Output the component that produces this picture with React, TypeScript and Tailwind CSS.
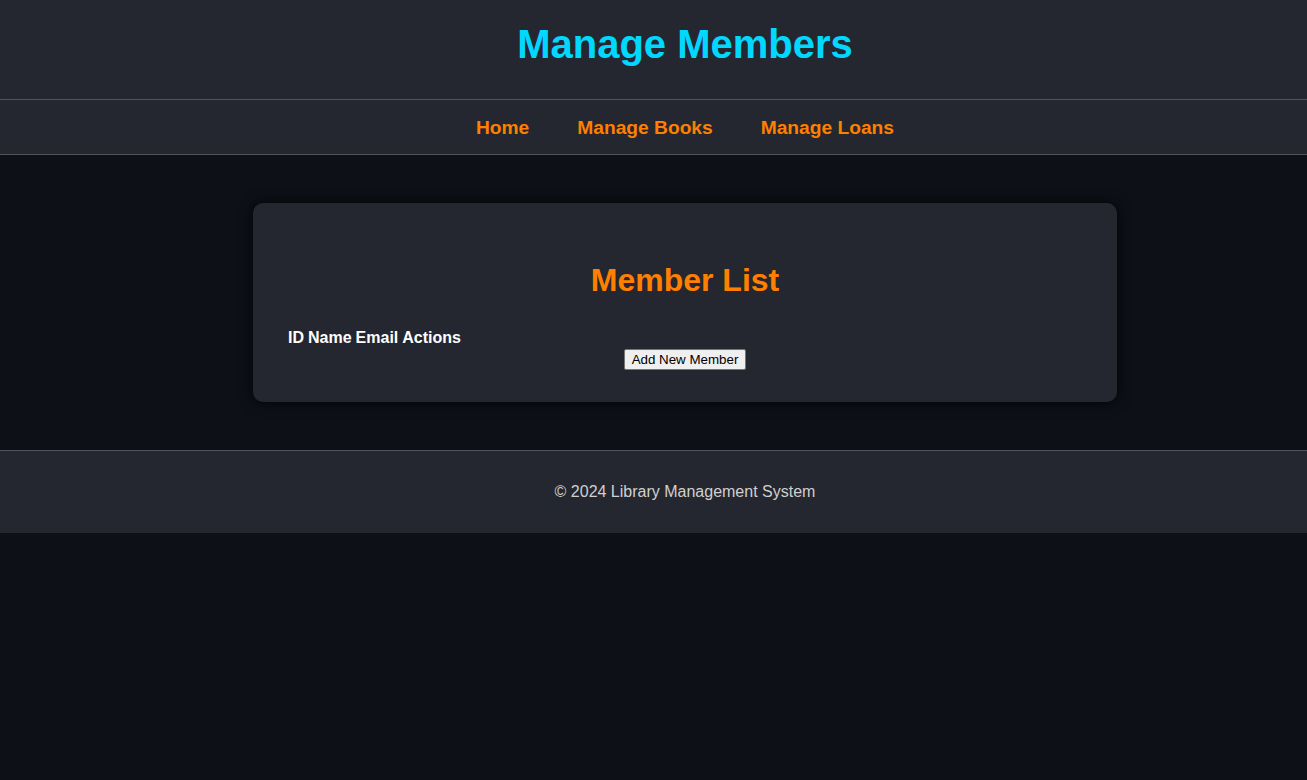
const navLinks = ["Home", "Manage Books", "Manage Loans"];

export default function App() {
  return (
    <div className="min-h-screen overflow-hidden bg-[#0d1017] font-['Liberation_Sans',Arial,sans-serif]">
      <div className="w-[1370px]">
        <header className="h-[99px] bg-[#24272f] pt-[21px] text-center">
          <h1 className="text-[40px] leading-[46px] font-bold text-[#00d8ff]">
            Manage Members
          </h1>
        </header>

        <nav className="flex h-[56px] items-center justify-center gap-12 border-y border-[#50545c] bg-[#24272f] pt-px">
          {navLinks.map((link) => (
            <a
              key={link}
              href="#"
              className="text-[19.2px] leading-[22px] font-bold text-[#ff7f00]"
            >
              {link}
            </a>
          ))}
        </nav>

        <main className="py-12">
          <section className="mx-auto w-[864px] rounded-[10px] bg-[#24272f] p-8 shadow-[0_0_14px_rgba(0,0,0,0.85)]">
            <h2 className="mt-[26.5px] mb-[27.5px] text-center text-[32px] leading-[37px] font-bold text-[#ff7f00]">
              Member List
            </h2>
            <table className="border-separate border-spacing-[2px] text-white">
              <thead>
                <tr>
                  <th className="p-px text-left text-base leading-[18.4px] font-bold">ID</th>
                  <th className="p-px text-left text-base leading-[18.4px] font-bold">Name</th>
                  <th className="p-px text-left text-base leading-[18.4px] font-bold">Email</th>
                  <th className="p-px text-left text-base leading-[18.4px] font-bold">Actions</th>
                </tr>
              </thead>
              <tbody></tbody>
            </table>
            <button
              type="button"
              className="mx-auto -mt-px block rounded-[2px] border border-[#767676] bg-[#efefef] px-[7px] py-px text-[13.33px] leading-[17px] text-black"
            >
              Add New Member
            </button>
          </section>
        </main>

        <footer className="border-t border-[#50545c] bg-[#24272f] pt-4 pb-[15px] text-center">
          <p className="my-4 text-base leading-[18.4px] text-[#d0d0d0]">
            © 2024 Library Management System
          </p>
        </footer>
      </div>
    </div>
  );
}
